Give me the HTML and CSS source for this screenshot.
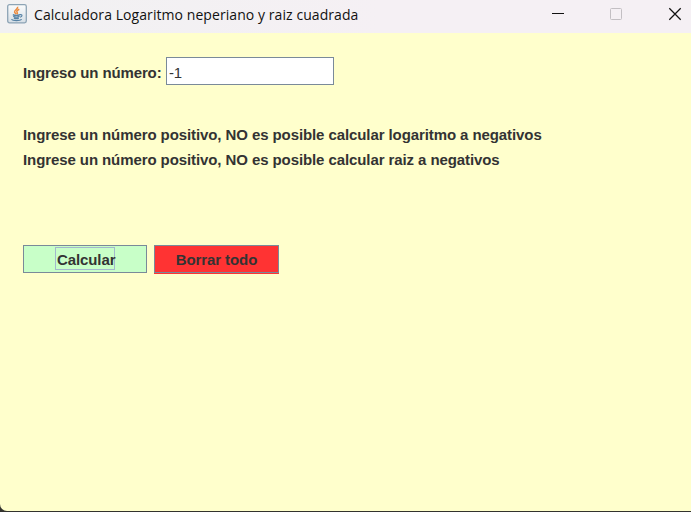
FILE: index.html
```
<!DOCTYPE html>
<html lang="es">
<head>
<meta charset="utf-8">
<title>Calculadora Logaritmo neperiano y raiz cuadrada</title>
<link rel="stylesheet" href="styles.css">
</head>
<body>
<div class="frame">
<div class="window">
  <header class="titlebar">
    <svg class="app-icon" width="20" height="20" viewBox="0 0 20 20">
      <defs><linearGradient id="tile" x1="0" y1="0" x2="0" y2="1"><stop offset="0" stop-color="#fbfcfc"/><stop offset="1" stop-color="#d5dee5"/></linearGradient></defs>
      <rect x=".7" y=".7" width="18.6" height="18.2" rx="1.8" fill="url(#tile)" stroke="#8da4b5" stroke-width="1.3"/>
      <path d="M10.6 2.8C11.4 5 7.2 5.8 7.6 8c.2 1 1.2 1.5 1.5 2.3M12.3 5.3c-2.5 1.1-3 2.1-2.1 3.2.5.7.2 1.2-.2 1.8" fill="none" stroke="#ec8a3c" stroke-width="1.5"/>
      <path d="M5.8 10.6c1.7.8 5.3.8 7.2 0M6.2 12.4c1.8.8 4.6.8 6.3 0M6.9 14.1c1.5.6 3.5.6 4.9 0M13 10.7c2.5-.6 2.8 1.5 0 2.6M4.4 15.4c1.5 1.5 8.6 1.5 10.3 0" fill="none" stroke="#5783a5" stroke-width="1.2"/>
    </svg>
    <h1 class="title">Calculadora Logaritmo neperiano y raiz cuadrada</h1>
    <div class="controls">
      <svg width="14" height="14" viewBox="0 0 14 14"><path d="M1 6.5h12" stroke="#111" fill="none"/></svg>
      <svg width="14" height="14" viewBox="0 0 14 14"><rect x="1.5" y="1.5" width="11" height="11" rx="1" stroke="#c3bfc3" fill="none"/></svg>
      <svg width="14" height="14" viewBox="0 0 14 14"><path d="M1.3 1.3l11.4 11.4M12.7 1.3L1.3 12.7" stroke="#111" stroke-width="1.25" fill="none"/></svg>
    </div>
  </header>
  <main class="panel">
    <div class="field-row">
      <label for="numero">Ingreso un número:</label>
      <input class="field" id="numero" type="text" value="-1">
    </div>
    <div class="messages">
      <p>Ingrese un número positivo, NO es posible calcular logaritmo a negativos</p>
      <p>Ingrese un número positivo, NO es posible calcular raiz a negativos</p>
    </div>
    <div class="actions">
      <button class="btn calc"><span>Calcular</span></button>
      <button class="btn clear">Borrar todo</button>
    </div>
  </main>
</div>
</div>
</body>
</html>
```
FILE: styles.css
```
* { box-sizing: border-box; }
body {
  margin: 0;
  height: 514px;
  overflow: hidden;
  background: #fff;
  color: #333;
  font: bold 15px/25px "Liberation Sans", Arial, sans-serif;
}
.frame {
  height: 512px;
  background: #33332e;
}
.window {
  height: 511px;
  background: #ffffcc;
  border-bottom-left-radius: 7px;
  overflow: hidden;
}
.titlebar {
  display: flex;
  align-items: flex-start;
  height: 33px;
  padding: 4px 9px 0 7px;
  background: linear-gradient(90deg, #f1f1f2, #f5f0f4 55%);
}
.app-icon { flex: none; }
.title {
  margin: 0 0 0 7px;
  font: 14px/22px "Open Sans", "Noto Sans", sans-serif;
  letter-spacing: 0.07px;
  color: #111;
  white-space: nowrap;
}
.controls {
  display: flex;
  gap: 45px;
  margin: 3px 0 0 auto;
}
.controls svg { display: block; }
.controls svg:first-child { margin-right: -1px; }
.panel { padding: 24px 23px 0; }
.field-row {
  display: flex;
  align-items: center;
  height: 28px;
}
.field-row label {
  width: 143px;
  padding-top: 3px;
  letter-spacing: -0.13px;
  white-space: nowrap;
}
.field {
  width: 168px;
  height: 28px;
  margin: 0;
  padding: 3px 2px 0;
  border: 1px solid #7a8a99;
  border-radius: 0;
  outline: 0;
  background: #fff;
  color: #333;
  font: 15px "Liberation Sans", Arial, sans-serif;
  letter-spacing: -0.2px;
}
.messages {
  padding-top: 37px;
  letter-spacing: -0.09px;
  white-space: nowrap;
}
.messages p { margin: 0; }
.actions {
  display: flex;
  gap: 7px;
  margin-top: 73px;
}
.btn {
  display: flex;
  align-items: center;
  justify-content: center;
  height: 28px;
  padding: 0;
  border: 1px solid #7a8a99;
  border-radius: 0;
  color: #333;
  font: bold 15px/22px "Liberation Sans", Arial, sans-serif;
  letter-spacing: -0.1px;
}
.calc {
  width: 124px;
  padding-bottom: 1px;
  background: #c8ffc8;
}
.calc span {
  width: 60px;
  height: 23px;
  padding-left: 1px;
  border: 1px solid #a3b8cc;
  line-height: 23px;
  white-space: nowrap;
}
.clear {
  width: 125px;
  padding-top: 2px;
  background: #ff3333;
  box-shadow: 0 1px #ff3333;
}
```
